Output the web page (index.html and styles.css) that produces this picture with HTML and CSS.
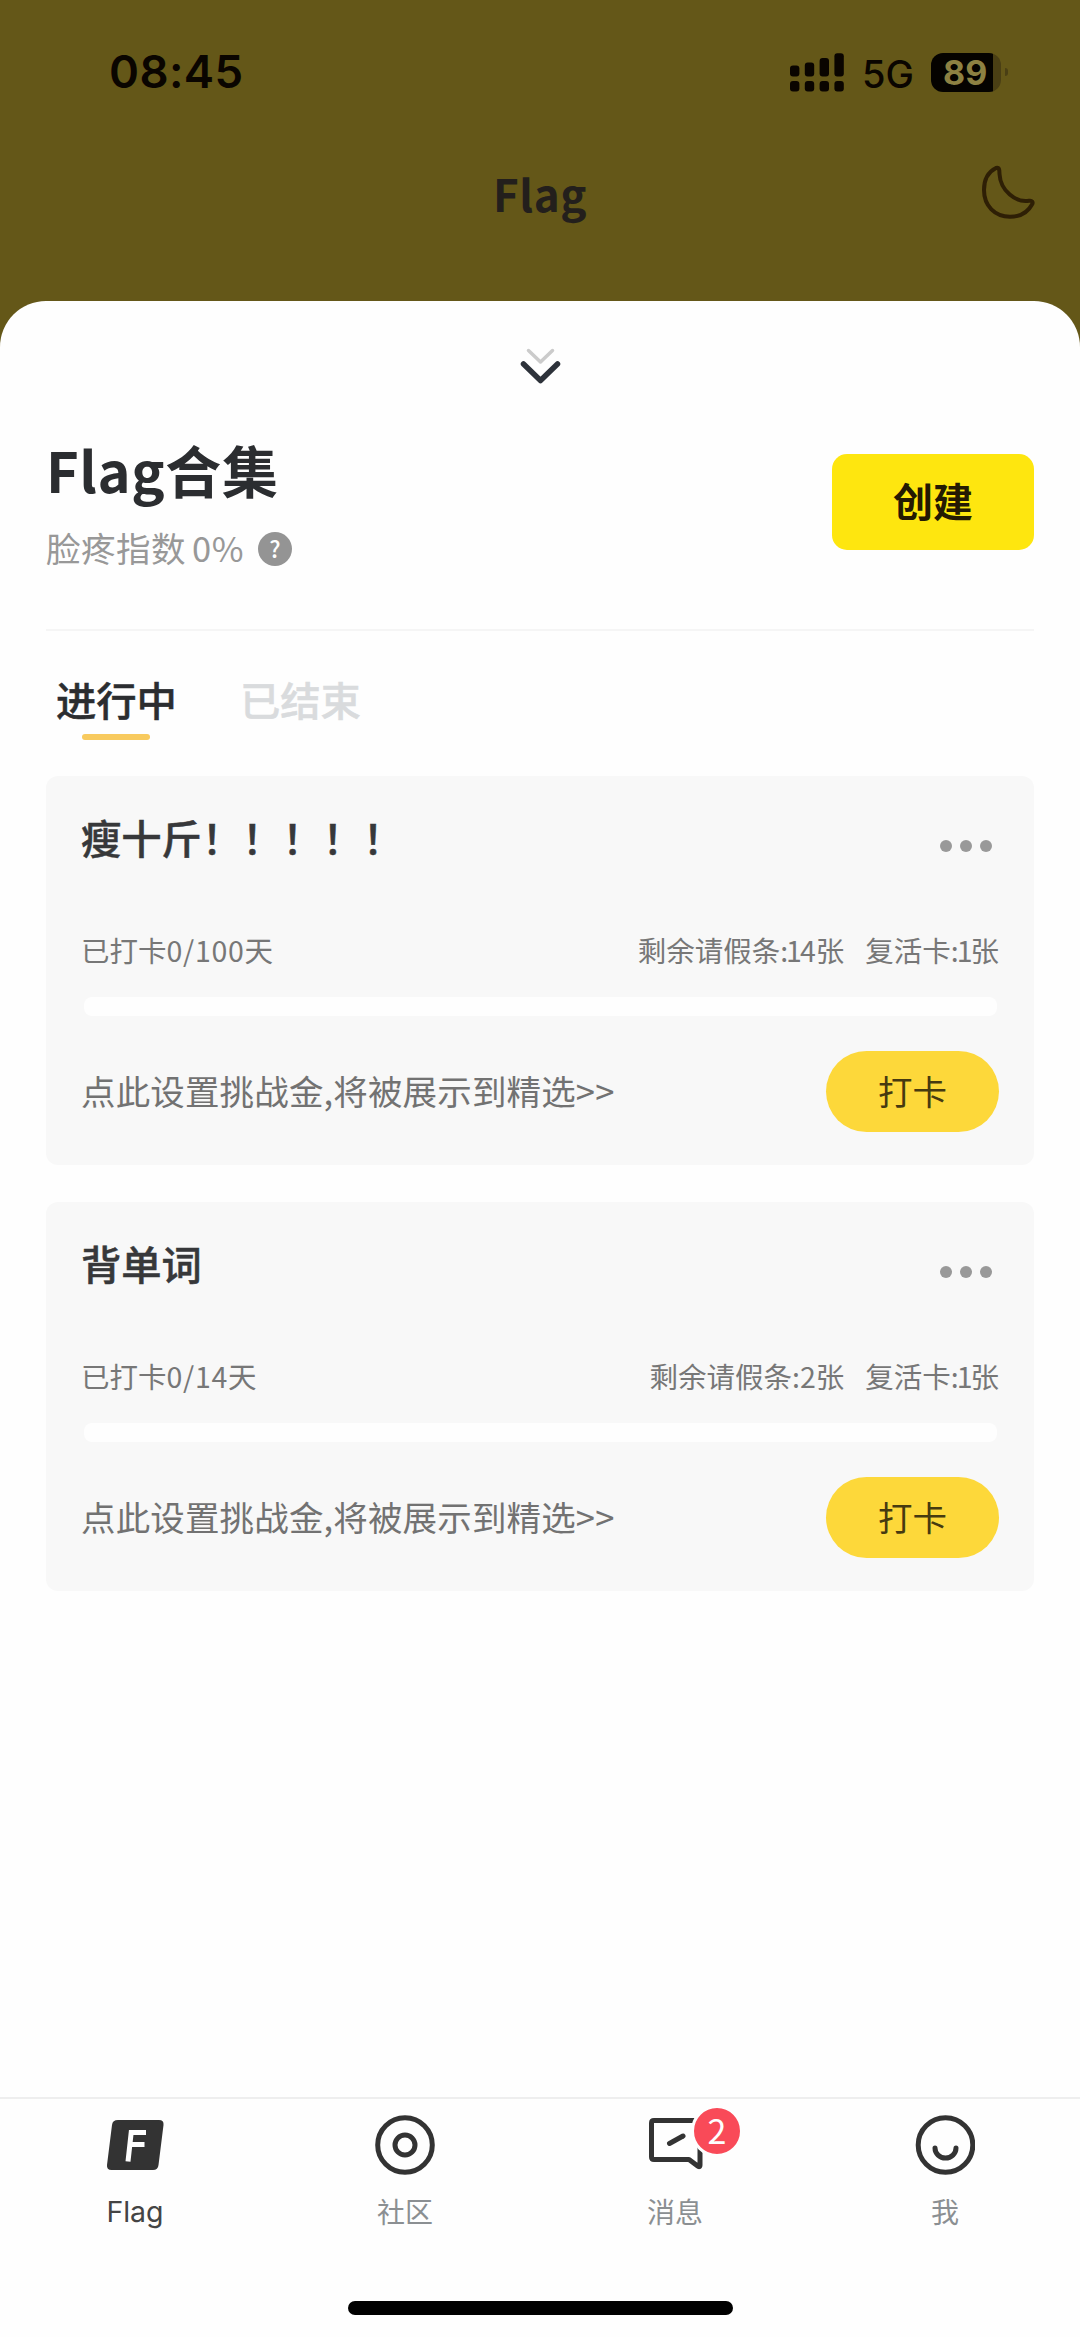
FILE: index.html
```html
<!DOCTYPE html>
<html lang="zh-CN">
<head>
<meta charset="utf-8">
<title>Flag</title>
<link rel="stylesheet" href="styles.css">
</head>
<body>
<div class="screen">
  <div class="status">
    <span class="clock">08:45</span>
    <div class="status-right">
      <svg class="signal" width="54" height="39" viewBox="0 0 54 39">
        <g>
          <rect x="0" y="12.5" width="9.4" height="11" rx="3"/><rect x="14.8" y="9.5" width="9.4" height="14" rx="3"/>
          <rect x="29.6" y="5" width="9.4" height="18.5" rx="3"/><rect x="44.4" y="0.3" width="9.4" height="23.2" rx="3"/>
          <rect x="0" y="28" width="9.4" height="10.5" rx="3"/><rect x="14.8" y="28" width="9.4" height="10.5" rx="3"/>
          <rect x="29.6" y="28" width="9.4" height="10.5" rx="3"/><rect x="44.4" y="28" width="9.4" height="10.5" rx="3"/>
        </g>
      </svg>
      <span class="net">5G</span>
      <div class="battery"><span class="level">89</span></div>
      <span class="nub"></span>
    </div>
  </div>
  <div class="navbar">
    <span></span>
    <h1 class="nav-title">Flag</h1>
    <svg class="moon" width="56" height="56" viewBox="0 0 56 56">
      <path d="M16 3C8 7 4 15.500 4 25C4 41 15 51.700 30 51.700C40 51.700 48 47 52 39.500C53.500 37 52 35.300 49 35.800C36 38 20.500 26 19.500 9C19.500 4 19 2 16 3Z"/>
    </svg>
  </div>
  <main class="sheet">
    <svg class="chevrons" width="41" height="38" viewBox="0 0 41 38">
      <path class="faint" d="M8.500 3.500L20.500 15L32.500 3.500"/>
      <path class="dark" d="M3.500 17L20.500 33.500L37.500 17"/>
    </svg>
    <header class="head">
      <div>
        <h2 class="title">Flag合集</h2>
        <p class="index"><span class="index-text">脸疼指数</span><span class="index-text percent">0%</span><span class="help">?</span></p>
      </div>
      <button class="create">创建</button>
    </header>
    <nav class="tabs">
      <span class="tab active">进行中</span>
      <span class="tab">已结束</span>
    </nav>
    <section class="cards">
      <article class="card">
        <div class="row card-head"><h3>瘦十斤！！！！！</h3><span class="dots"><i></i><i></i><i></i></span></div>
        <div class="row stats"><span>已打卡<span class="count">0/100</span>天</span><span class="left"><span>剩余请假条:<span class="one">1</span>4张</span><span>复活卡:<span class="one">1</span>张</span></span></div>
        <div class="bar"></div>
        <div class="row action"><span class="hint">点此设置挑战金,将被展示到精选&gt;&gt;</span><button class="punch">打卡</button></div>
      </article>
      <article class="card">
        <div class="row card-head"><h3>背单词</h3><span class="dots"><i></i><i></i><i></i></span></div>
        <div class="row stats"><span>已打卡<span class="count">0/14</span>天</span><span class="left"><span>剩余请假条:2张</span><span>复活卡:<span class="one">1</span>张</span></span></div>
        <div class="bar"></div>
        <div class="row action"><span class="hint">点此设置挑战金,将被展示到精选&gt;&gt;</span><button class="punch">打卡</button></div>
      </article>
    </section>
  </main>
  <footer class="tabbar">
    <div class="items">
      <div class="item on">
        <svg width="60" height="60" viewBox="0 0 60 60"><path class="solid" d="M13 5H54Q59 5 58.500 10L53.500 50Q53 55 48 55H6.500Q1.500 55 2 50L7 10Q7.500 5 13 5Z"/><path class="mark" d="M41 17.500H26.200L23 46.500M25 29.500H39.500"/></svg>
        <span>Flag</span>
      </div>
      <div class="item">
        <svg width="60" height="60" viewBox="0 0 60 60"><circle cx="30" cy="30" r="27.300"/><circle cx="30" cy="30" r="10"/></svg>
        <span>社区</span>
      </div>
      <div class="item">
        <div class="icon-wrap">
          <svg width="60" height="60" viewBox="0 0 60 60"><path d="M55 30V50Q55 53 52 50.500L44 44.500H9Q6.500 44.500 6.500 42V8Q6.500 5.500 9 5.500H52"/><path d="M24.500 28.500L38 21"/></svg>
          <span class="badge">2</span>
        </div>
        <span>消息</span>
      </div>
      <div class="item">
        <svg width="60" height="60" viewBox="0 0 60 60"><circle cx="30.500" cy="30" r="27.300"/><path d="M20 33A10.500 10 0 0 0 41 33"/></svg>
        <span>我</span>
      </div>
    </div>
    <div class="home"></div>
  </footer>
</div>
</body>
</html>
```
FILE: styles.css
```css
* { box-sizing: border-box; margin: 0; padding: 0; }
body { background: #fefefe; font-family: "Noto Sans CJK SC", sans-serif; }
button { border: 0; font-family: inherit; }
.screen { width: 1080px; height: 2337px; background: #645718; display: flex; flex-direction: column; overflow: hidden; }
.status { height: 144px; padding: 0 72px 0 109px; display: flex; align-items: center; justify-content: space-between; font-family: Inter, sans-serif; color: #0a0500; }
.clock { font-size: 45.500px; font-weight: 600; letter-spacing: 0.400px; line-height: 60px; }
.status-right { display: flex; align-items: center; }
.signal { fill: #0a0500; }
.net { font-size: 38px; font-weight: 500; line-height: 39px; margin: 4px 0 0 18px; width: 69px; }
.battery { width: 70px; height: 39px; border-radius: 12px; background: linear-gradient(90deg, #050300 62px, #4a3f14 62px); display: flex; align-items: center; padding-left: 12px; }
.level { font-size: 34px; font-weight: 700; color: #8d8142; line-height: 39px; }
.nub { width: 3px; height: 8px; margin-left: 4px; border-radius: 0 3px 3px 0; background: #4a3f14; }
.navbar { height: 157px; padding: 18px 44px 0 0; display: grid; grid-template-columns: 100px 1fr 56px; align-items: start; }
.nav-title { font-size: 44px; line-height: 62px; letter-spacing: 0.500px; text-align: center; color: #231f1c; font-weight: 700; }
.moon { fill: none; stroke: #2e1f05; stroke-width: 4; stroke-linejoin: round; margin-top: 3px; }
.sheet { flex: 1; background: #fefefe; border-radius: 46px 46px 0 0; padding: 46px 46px 0; }
.chevrons { display: block; margin: 0 auto; fill: none; stroke-linecap: round; stroke-linejoin: round; }
.faint { stroke: #cbcbcb; stroke-width: 3.5; }
.dark { stroke: #2d323a; stroke-width: 5.5; }
.head { height: 246px; display: flex; justify-content: space-between; border-bottom: 2px solid #f5f5f5; }
.title { margin-top: 44px; font-size: 56px; line-height: 80px; letter-spacing: 0.600px; color: #2b2d30; }
.index { margin-top: 18px; display: flex; align-items: center; font-size: 34.500px; line-height: 44px; color: #989898; }
.index-text { letter-spacing: 0.500px; transform: translateY(-2px); }
.percent { margin-left: 6px; }
.help { width: 34px; height: 34px; margin-left: 14px; border-radius: 50%; background: #949494; color: #fefefe; font-size: 23px; font-weight: 500; line-height: 33px; text-align: center; }
.create { width: 202px; height: 96px; margin-top: 69px; padding-bottom: 4px; border-radius: 15px; background: #fee60f; color: #241a02; font-size: 40px; font-weight: 700; }
.tabs { display: flex; gap: 63px; padding: 38px 10px 0; height: 145px; }
.tab { font-size: 40.300px; line-height: 60px; font-weight: 500; color: #d9dbdd; -webkit-text-stroke: 0.500px; }
.tab.active { color: #2b2d30; display: flex; flex-direction: column; align-items: center; }
.tab.active::after { content: ""; width: 68px; height: 6px; margin-top: 5px; border-radius: 3px; background: #f8ca5e; }
.cards { display: flex; flex-direction: column; gap: 37px; }
.card { height: 389px; border-radius: 12px; background: #f8f8f8; padding: 31px 35px 0; }
.row { display: flex; align-items: center; justify-content: space-between; }
.card-head { height: 60px; }
.card-head h3 { font-size: 40.300px; font-weight: 500; color: #37383a; line-height: 60px; -webkit-text-stroke: 0.500px; }
.dots { display: flex; gap: 8px; padding: 18px 7px 0 0; }
.dots i { width: 12px; height: 12px; border-radius: 50%; background: #999; }
.stats { margin-top: 62px; height: 42px; font-size: 28.500px; color: #777; line-height: 42px; }
.count { letter-spacing: 0.700px; }
.one { margin: 0 -2px; }
.left { display: flex; gap: 21px; }
.bar { height: 19px; margin: 26px 2px 0 3px; border-radius: 8px; background: #fefefe; }
.action { margin-top: 35px; height: 81px; }
.hint { font-size: 34.500px; letter-spacing: 0.150px; color: #727272; padding-bottom: 4px; }
.punch { width: 173px; height: 81px; padding-bottom: 4px; border-radius: 41px; background: #fdd83a; color: #463a10; font-size: 34.500px; }
.tabbar { height: 240px; background: #fefefe; border-top: 2px solid #eee; display: flex; flex-direction: column; align-items: center; }
.items { display: grid; grid-template-columns: repeat(4, 1fr); width: 1080px; height: 202px; padding-top: 16px; }
.item { display: flex; flex-direction: column; align-items: center; gap: 15px; font-size: 28px; line-height: 42px; color: #8b8f92; }
.item svg { display: block; fill: none; stroke: #333; stroke-width: 5; stroke-linecap: round; stroke-linejoin: round; }
.item svg .solid { fill: #333; stroke: none; }
.item svg .mark { stroke: #fefefe; stroke-width: 5; stroke-linecap: butt; stroke-linejoin: miter; }
.item.on { color: #444; font-family: Inter, sans-serif; font-size: 28.500px; gap: 16px; }
.icon-wrap { position: relative; }
.badge { position: absolute; left: 46px; top: -10px; width: 52px; height: 52px; border: 3px solid #fefefe; border-radius: 50%; background: #f94a58; color: #fefefe; font-size: 34px; line-height: 43px; text-align: center; }
.home { width: 385px; height: 14px; border-radius: 7px; background: #000; }
```
